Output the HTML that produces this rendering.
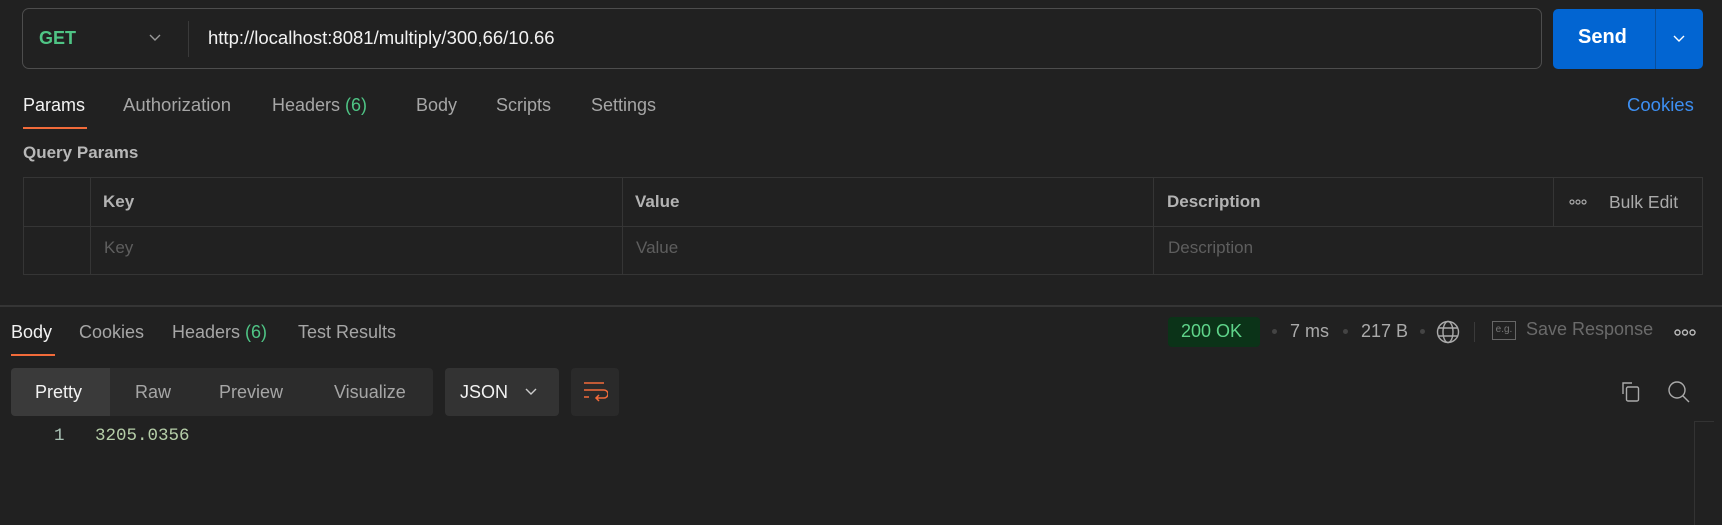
<!DOCTYPE html>
<html><head><meta charset="utf-8"><style>
*{box-sizing:border-box;margin:0;padding:0}
body{width:1722px;height:525px;background:#212121;font-family:"Liberation Sans",Arial,sans-serif;position:relative;overflow:hidden;color:#a6a6a6}
.a{position:absolute;white-space:nowrap}
.t{font-size:18px;line-height:22px}
</style></head><body>
<!-- URL bar -->
<div class="a" style="left:22px;top:8px;width:1520px;height:61px;border:1px solid #4d4d4d;border-radius:7px"></div>
<div class="a" style="left:39px;top:28px;font-size:18px;font-weight:bold;color:#4fc485">GET</div>
<svg class="a" style="left:148px;top:33px" width="14" height="10"><path d="M2 2l5 5 5-5" stroke="#999" stroke-width="1.4" fill="none"/></svg>
<div class="a" style="left:188px;top:21px;width:1px;height:36px;background:#3a3a3a"></div>
<div class="a" style="left:208px;top:27px;font-size:18.5px;color:#f2f2f2">http://localhost:8081/multiply/300,66/10.66</div>
<div class="a" style="left:1553px;top:9px;width:150px;height:60px;background:#0265d2;border-radius:5px"></div>
<div class="a" style="left:1655px;top:9px;width:1px;height:60px;background:#0a4f9c"></div>
<div class="a" style="left:1578px;top:26px;font-size:20px;font-weight:bold;color:#fff">Send</div>
<svg class="a" style="left:1672px;top:34px" width="14" height="10"><path d="M2 2l5 5 5-5" stroke="#fff" stroke-width="1.4" fill="none"/></svg>
<!-- request tabs -->
<div class="a t" style="left:23px;top:94px;color:#f2f2f2">Params</div>
<div class="a t" style="left:123px;top:94px;font-size:18.5px">Authorization</div>
<div class="a t" style="left:272px;top:94px">Headers <span style="color:#4fc485">(6)</span></div>
<div class="a t" style="left:416px;top:94px">Body</div>
<div class="a t" style="left:496px;top:94px">Scripts</div>
<div class="a t" style="left:591px;top:94px">Settings</div>
<div class="a" style="left:23px;top:127px;width:64px;height:2px;background:#f26b3a"></div>
<div class="a t" style="left:1627px;top:94px;color:#3d8ff2;font-size:18.5px">Cookies</div>
<div class="a" style="left:23px;top:143px;font-size:17px;font-weight:bold;color:#b8b8b8">Query Params</div>
<!-- table -->
<div class="a" style="left:23px;top:177px;width:1680px;height:98px;border:1px solid #353535"></div>
<div class="a" style="left:23px;top:226px;width:1680px;height:1px;background:#353535"></div>
<div class="a" style="left:90px;top:177px;width:1px;height:98px;background:#353535"></div>
<div class="a" style="left:622px;top:177px;width:1px;height:98px;background:#353535"></div>
<div class="a" style="left:1153px;top:177px;width:1px;height:98px;background:#353535"></div>
<div class="a" style="left:1553px;top:177px;width:1px;height:49px;background:#353535"></div>
<div class="a" style="left:103px;top:192px;font-size:17px;font-weight:bold;color:#b3b3b3">Key</div>
<div class="a" style="left:635px;top:192px;font-size:17px;font-weight:bold;color:#b3b3b3">Value</div>
<div class="a" style="left:1167px;top:192px;font-size:17px;font-weight:bold;color:#b3b3b3">Description</div>
<svg class="a" style="left:1569px;top:198px" width="18" height="8" fill="none" stroke="#aaa" stroke-width="1.2"><circle cx="3" cy="4" r="2"/><circle cx="9" cy="4" r="2"/><circle cx="15" cy="4" r="2"/></svg>
<div class="a" style="left:1609px;top:192px;font-size:17.5px;color:#aaa">Bulk Edit</div>
<div class="a" style="left:104px;top:238px;font-size:17px;color:#5e5e5e">Key</div>
<div class="a" style="left:636px;top:238px;font-size:17px;color:#5e5e5e">Value</div>
<div class="a" style="left:1168px;top:238px;font-size:17px;color:#5e5e5e">Description</div>
<!-- separator -->
<div class="a" style="left:0;top:305px;width:1722px;height:2px;background:#353535"></div>
<!-- response tabs -->
<div class="a t" style="left:11px;top:321px;color:#f2f2f2">Body</div>
<div class="a t" style="left:79px;top:321px">Cookies</div>
<div class="a t" style="left:172px;top:321px">Headers <span style="color:#4fc485">(6)</span></div>
<div class="a t" style="left:298px;top:321px">Test Results</div>
<div class="a" style="left:11px;top:354px;width:44px;height:2px;background:#f26b3a"></div>
<div class="a" style="left:1168px;top:317px;width:92px;height:30px;background:#0b3318;border-radius:4px"></div>
<div class="a" style="left:1181px;top:321px;font-size:18px;color:#5fd48a">200 OK</div>
<div class="a" style="left:1272px;top:329px;width:5px;height:5px;border-radius:3px;background:#444"></div>
<div class="a" style="left:1290px;top:321px;font-size:18px;color:#aaa">7 ms</div>
<div class="a" style="left:1343px;top:329px;width:5px;height:5px;border-radius:3px;background:#444"></div>
<div class="a" style="left:1361px;top:321px;font-size:18px;color:#aaa">217 B</div>
<div class="a" style="left:1420px;top:329px;width:5px;height:5px;border-radius:3px;background:#444"></div>
<svg class="a" style="left:1436px;top:320px" width="24" height="24" fill="none" stroke="#aaa" stroke-width="1.4"><circle cx="12" cy="12" r="10.5"/><ellipse cx="12" cy="12" rx="5" ry="10.5"/><path d="M2 8h20M2 16h20"/></svg>
<div class="a" style="left:1474px;top:322px;width:1px;height:20px;background:#3a3a3a"></div>
<div class="a" style="left:1492px;top:321px;width:24px;height:19px;border:1.5px solid #666;font-size:10px;color:#777;text-align:center;line-height:16px">e.g.</div>
<div class="a" style="left:1526px;top:319px;font-size:18px;color:#6a6a6a">Save Response</div>
<svg class="a" style="left:1674px;top:328px" width="22" height="9" fill="none" stroke="#bbb" stroke-width="1.4"><circle cx="3.5" cy="4.5" r="2.5"/><circle cx="11" cy="4.5" r="2.5"/><circle cx="18.5" cy="4.5" r="2.5"/></svg>
<!-- controls -->
<div class="a" style="left:11px;top:368px;width:422px;height:48px;background:#2c2c2c;border-radius:4px"></div>
<div class="a" style="left:11px;top:368px;width:99px;height:48px;background:#3a3a3a;border-radius:4px 0 0 4px"></div>
<div class="a t" style="left:35px;top:381px;color:#f2f2f2">Pretty</div>
<div class="a t" style="left:135px;top:381px">Raw</div>
<div class="a t" style="left:219px;top:381px">Preview</div>
<div class="a t" style="left:334px;top:381px">Visualize</div>
<div class="a" style="left:445px;top:368px;width:114px;height:48px;background:#333;border-radius:4px"></div>
<div class="a t" style="left:460px;top:381px;color:#f2f2f2">JSON</div>
<svg class="a" style="left:524px;top:387px" width="14" height="10"><path d="M2 2l5 5 5-5" stroke="#ccc" stroke-width="1.4" fill="none"/></svg>
<div class="a" style="left:571px;top:368px;width:48px;height:48px;background:#2a2a2a;border-radius:4px"></div>
<svg class="a" style="left:582px;top:380px" width="26" height="24" fill="none" stroke="#f26b3a" stroke-width="1.5"><path d="M2 3h20M2 10h20a4 4 0 0 1 0 8h-8M2 17h5M17 15l-3 3 3 3"/></svg>
<svg class="a" style="left:1619px;top:380px" width="24" height="24" fill="none" stroke="#aaa" stroke-width="1.4"><path d="M4 14V3h9"/><rect x="7.5" y="7" width="12" height="14" rx="1.5"/></svg>
<svg class="a" style="left:1667px;top:380px" width="24" height="24" fill="none" stroke="#aaa" stroke-width="1.4"><circle cx="10" cy="10" r="8"/><path d="M16 16l6 6"/></svg>
<!-- code -->
<div class="a" style="left:54px;top:426px;font-family:'Liberation Mono',monospace;font-size:17.5px;color:#a9c1b4">1</div>
<div class="a" style="left:95px;top:426px;font-family:'Liberation Mono',monospace;font-size:17.5px;color:#b5cea8">3205.0356</div>
<div class="a" style="left:1694px;top:422px;width:1px;height:103px;background:#333"></div>
<div class="a" style="left:1694px;top:421px;width:20px;height:1px;background:#333"></div>
</body></html>
